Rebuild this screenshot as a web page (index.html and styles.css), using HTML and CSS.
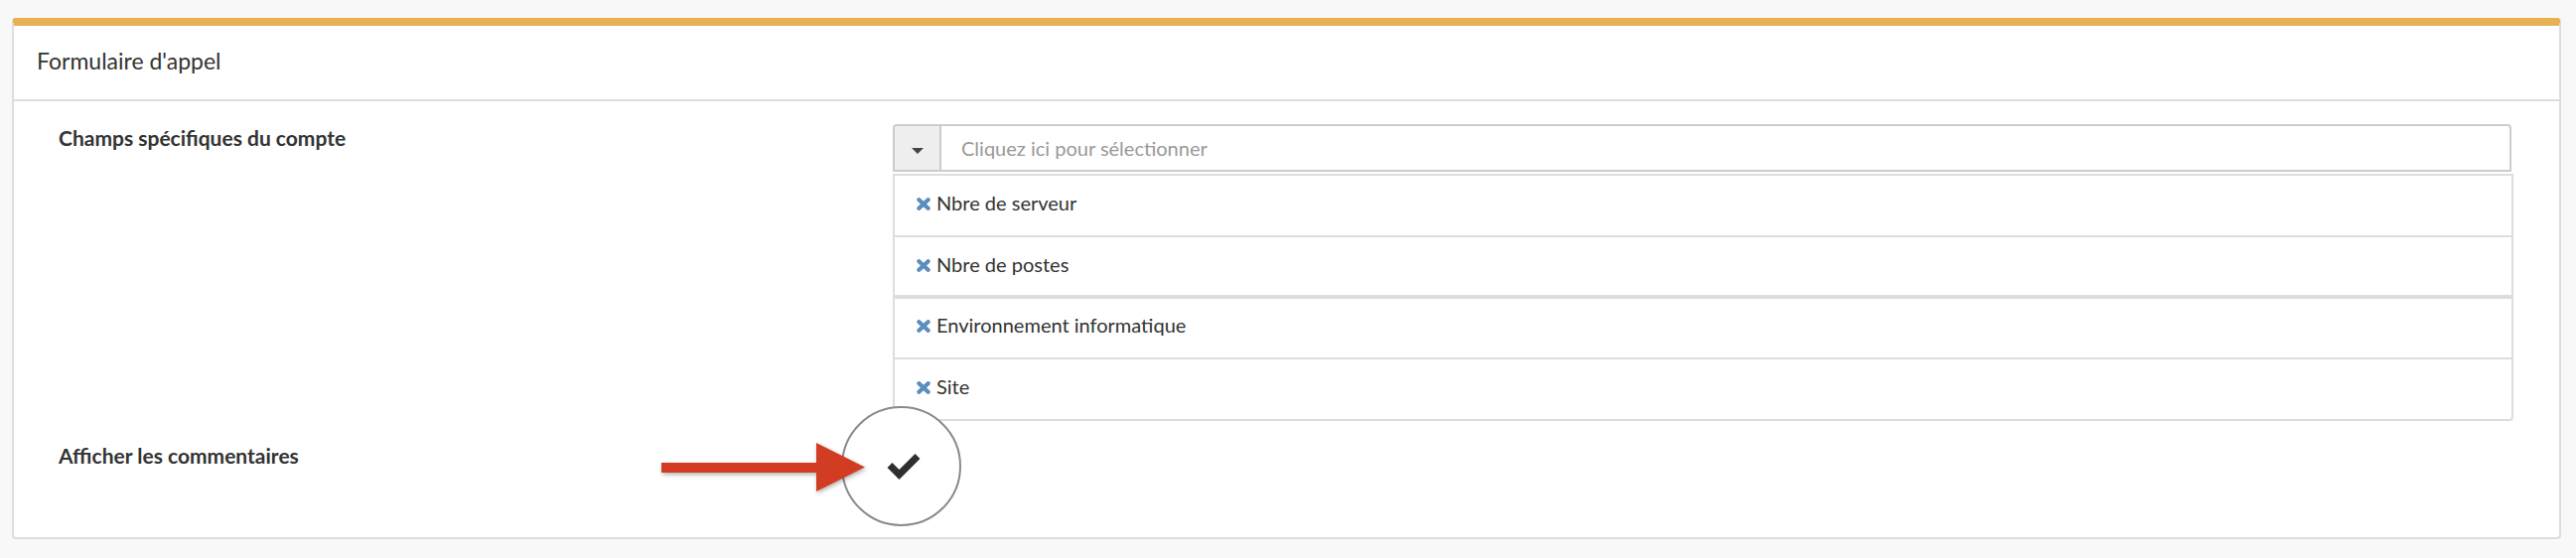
FILE: index.html
```html
<!DOCTYPE html>
<html lang="fr">
<head>
<meta charset="utf-8">
<title>Formulaire d'appel</title>
<link rel="stylesheet" href="styles.css">
</head>
<body>
<div class="panel">
  <div class="panel-heading">Formulaire d'appel</div>
  <div class="panel-body">
    <div class="form-row">
      <label class="form-label">Champs spécifiques du compte</label>
      <div class="form-field">
        <div class="select">
          <span class="select-toggle">
            <svg class="caret" width="12" height="6" viewBox="0 0 12 6"><polygon points="0,0 12,0 6,6" fill="#444"/></svg>
          </span>
          <span class="select-placeholder">Cliquez ici pour sélectionner</span>
        </div>
        <ul class="choice-list">
          <li class="choice"><svg class="remove" width="14" height="13" viewBox="0 0 14 13"><path d="M2.4 2.2 L11.6 10.8 M11.6 2.2 L2.4 10.8" stroke="#5a8dc0" stroke-width="4.2" stroke-linecap="round"/></svg>Nbre de serveur</li>
          <li class="choice choice-short"><svg class="remove" width="14" height="13" viewBox="0 0 14 13"><path d="M2.4 2.2 L11.6 10.8 M11.6 2.2 L2.4 10.8" stroke="#5a8dc0" stroke-width="4.2" stroke-linecap="round"/></svg>Nbre de postes</li>
          <li class="choice choice-group"><svg class="remove" width="14" height="13" viewBox="0 0 14 13"><path d="M2.4 2.2 L11.6 10.8 M11.6 2.2 L2.4 10.8" stroke="#5a8dc0" stroke-width="4.2" stroke-linecap="round"/></svg>Environnement informatique</li>
          <li class="choice"><svg class="remove" width="14" height="13" viewBox="0 0 14 13"><path d="M2.4 2.2 L11.6 10.8 M11.6 2.2 L2.4 10.8" stroke="#5a8dc0" stroke-width="4.2" stroke-linecap="round"/></svg>Site</li>
        </ul>
      </div>
    </div>
    <div class="form-row form-row-check">
      <label class="form-label">Afficher les commentaires</label>
      <div class="form-field check-field">
        <svg class="arrow" width="212" height="54" viewBox="0 0 212 54">
          <rect x="0" y="20" width="157" height="10" fill="#d13c22"/>
          <polygon points="156,0 205,24.5 156,49" fill="#d13c22"/>
        </svg>
        <div class="magnifier">
          <svg class="check" width="44" height="34" viewBox="0 0 44 34"><path d="M9 15.5 L18.5 25 L37 6.5" fill="none" stroke="#2f2f2f" stroke-width="7" stroke-linejoin="miter"/></svg>
        </div>
      </div>
    </div>
  </div>
</div>
</body>
</html>
```
FILE: styles.css
```css
* {
  box-sizing: border-box;
}

body {
  margin: 0;
  padding: 18px 15px 20px 12px;
  background: #f8f8f8;
  font-family: Lato, "Liberation Sans", sans-serif;
  color: #333;
}

.panel {
  background: #fff;
  border: 2px solid #ddd;
  border-top: 8px solid #e7b053;
  border-radius: 4px;
}

.panel-heading {
  padding: 21px 23px 25px;
  font-size: 23px;
  line-height: 28px;
  border-bottom: 2px solid #ddd;
}

.panel-body {
  padding: 23px 46px 70px 45px;
}

.form-row {
  display: grid;
  grid-template-columns: 840px 1fr;
}

.form-label {
  font-weight: 700;
  font-size: 21px;
  line-height: 24px;
  padding-top: 2px;
}

.select {
  display: flex;
  height: 48px;
  margin-right: 2px;
  border: 2px solid #ccc;
  border-radius: 4px 4px 0 0;
}

.select-toggle {
  width: 47px;
  flex: none;
  background: #eee;
  border-right: 2px solid #ccc;
  border-radius: 2px 0 0 0;
  display: flex;
  align-items: center;
  justify-content: center;
}

.caret {
  margin-top: 6px;
}

.select-placeholder {
  display: flex;
  align-items: center;
  padding-left: 20px;
  font-size: 20px;
  color: #999;
}

.choice-list {
  list-style: none;
  margin: 2px 0 0;
  padding: 0;
  border: 2px solid #ddd;
  border-top: none;
  border-radius: 0 0 4px 4px;
}

.choice {
  border-top: 2px solid #ddd;
  padding: 15px 0 21px 22px;
  font-size: 20px;
  line-height: 24px;
}

.choice-short {
  padding-bottom: 19px;
}

.choice-group {
  border-top-width: 4px;
  padding-top: 14px;
}

.remove {
  margin-right: 6px;
}

.form-row-check {
  margin-top: 21px;
}

.check-field {
  position: relative;
}

.arrow {
  position: absolute;
  left: -233px;
  top: 1px;
  filter: drop-shadow(1px 2px 2px rgba(0, 0, 0, 0.3));
  z-index: 2;
}

.magnifier {
  position: absolute;
  left: -52px;
  top: -36px;
  width: 121px;
  height: 121px;
  border: 2px solid #8a8a8a;
  border-radius: 50%;
  background: #fff;
  display: flex;
  align-items: center;
  justify-content: center;
  z-index: 1;
}

.check {
  margin-left: 2px;
  margin-top: 0;
}
```
